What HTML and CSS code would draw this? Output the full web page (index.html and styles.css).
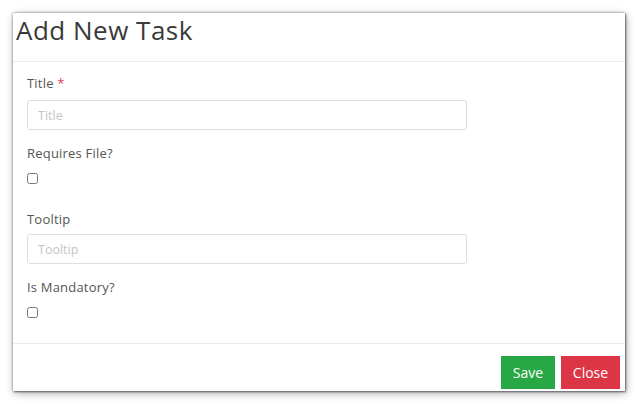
FILE: index.html
```html
<!DOCTYPE html>
<html lang="en">
<head>
    <meta charset="UTF-8">
    <meta name="viewport" content="width=device-width, initial-scale=1.0">
    <title>Add New Task</title>
    <link rel="stylesheet" href="styles.css">
</head>
<body>
    <div class="modal">
        <div class="modal_header">
            <h2>Add New Task</h2>
        </div>

        <div class="modal_body">
            <div class="group">
                <label for="title">Title <span class="required">*</span></label>
                <input type="text" id="title" placeholder="Title">
            </div>

            <div class="group">
                <label for="requires_file">Requires File?</label>
                <input type="checkbox" id="requires_file">
            </div>

            <div class="group group_wide">
                <label for="tooltip">Tooltip</label>
                <input type="text" id="tooltip" placeholder="Tooltip">
            </div>

            <div class="group">
                <label for="mandatory">Is Mandatory?</label>
                <input type="checkbox" id="mandatory">
            </div>
        </div>

        <div class="modal_footer">
            <button class="btn btn_save">Save</button>
            <button class="btn btn_close">Close</button>
        </div>
    </div>
</body>
</html>
```

FILE: styles.css
```css
* {
    margin: 0;
    padding: 0;
    box-sizing: border-box;
}

body {
    background-color: white;
    font-family: 'Open Sans', sans-serif;
    padding: 13px 14px 13px 13px;
}

.modal {
    width: 612px;
    height: 378px;
    background-color: white;
    box-shadow: 0 0 2px rgba(0, 0, 0, 0.45), 1px 1px 2px rgba(0, 0, 0, 0.4), 1px 2px 8px rgba(0, 0, 0, 0.35);
    display: flex;
    flex-direction: column;
}

.modal_header {
    height: 49px;
    border-bottom: 1px solid #ebebeb;
    padding: 0 3px;
}

.modal_header h2 {
    font-size: 26px;
    font-weight: 400;
    color: #3a3a3a;
    line-height: 32px;
    padding-top: 1px;
    letter-spacing: 0.5px;
}

.modal_body {
    flex: 1;
    padding: 11px 14px 0;
}

.group {
    margin-bottom: 13px;
}

.group_wide {
    margin-top: 25px;
}

.group label {
    display: block;
    font-size: 13px;
    line-height: 20px;
    color: #555;
    margin-bottom: 7px;
    letter-spacing: 0.2px;
}

.group_wide label {
    margin-bottom: 5px;
}

.required {
    color: #e3424f;
}

.group input[type="text"] {
    display: block;
    width: 440px;
    height: 30px;
    border: 1px solid #dedede;
    border-radius: 3px;
    padding: 0 10px;
    font-family: 'Open Sans', sans-serif;
    font-size: 12.5px;
    color: #555;
}

.group input[type="text"]::placeholder {
    color: #c4c4c4;
}

.group input[type="checkbox"] {
    display: block;
    width: 11px;
    height: 11px;
    margin: 10px 0 0;
}

.modal_footer {
    height: 48px;
    border-top: 1px solid #ebebeb;
    display: flex;
    justify-content: flex-end;
    gap: 6px;
    padding: 12px 5px 0;
}

.btn {
    height: 33px;
    border: none;
    color: white;
    font-family: 'Open Sans', sans-serif;
    font-size: 14px;
    padding: 0;
}

.btn_save {
    background-color: #28a745;
    width: 54px;
}

.btn_close {
    background-color: #dc3545;
    width: 59px;
}
```
